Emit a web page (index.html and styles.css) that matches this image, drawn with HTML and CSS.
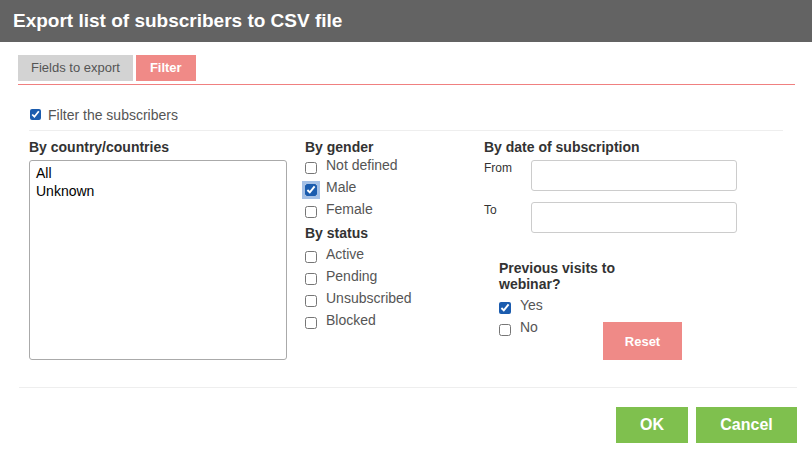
FILE: index.html
```html
<!DOCTYPE html>
<html>
<head>
<meta charset="utf-8">
<link rel="stylesheet" href="styles.css">
</head>
<body>
<div class="dialog">
  <header class="titlebar">Export list of subscribers to CSV file</header>
  <div class="body">
    <nav class="tabs">
      <span class="tab">Fields to export</span>
      <span class="tab active">Filter</span>
    </nav>
    <div class="panel">
      <label class="filter-row"><input type="checkbox" checked> Filter the subscribers</label>
      <div class="cols">
        <div class="col col-country">
          <h3>By country/countries</h3>
          <div class="listbox">
            <div>All</div>
            <div>Unknown</div>
          </div>
        </div>
        <div class="col col-gender">
          <h3>By gender</h3>
          <label class="cb"><input type="checkbox"><span>Not defined</span></label>
          <label class="cb"><input type="checkbox" class="focus" checked><span>Male</span></label>
          <label class="cb"><input type="checkbox"><span>Female</span></label>
          <h3 class="h-status">By status</h3>
          <label class="cb"><input type="checkbox"><span>Active</span></label>
          <label class="cb"><input type="checkbox"><span>Pending</span></label>
          <label class="cb"><input type="checkbox"><span>Unsubscribed</span></label>
          <label class="cb"><input type="checkbox"><span>Blocked</span></label>
        </div>
        <div class="col col-date">
          <h3>By date of subscription</h3>
          <div class="field"><span class="flabel">From</span><span class="input"></span></div>
          <div class="field"><span class="flabel">To</span><span class="input"></span></div>
          <div class="webinar">
            <h3 class="h-webinar">Previous visits to webinar?</h3>
            <div class="webinar-row">
              <div class="webinar-opts">
                <label class="cb"><input type="checkbox" checked><span>Yes</span></label>
                <label class="cb"><input type="checkbox"><span>No</span></label>
              </div>
              <button class="btn-reset">Reset</button>
            </div>
          </div>
        </div>
      </div>
    </div>
    <footer class="footer">
      <button class="btn-green btn-ok">OK</button>
      <button class="btn-green btn-cancel">Cancel</button>
    </footer>
  </div>
</div>
</body>
</html>
```
FILE: styles.css
```css
* { box-sizing: border-box; }
html, body { margin: 0; padding: 0; background: #fff; }
body { font-family: "Liberation Sans", Arial, sans-serif; color: #555; width: 812px; height: 461px; overflow: hidden; }

.titlebar {
  height: 42px;
  background: #636363;
  color: #fff;
  font-weight: bold;
  font-size: 19px;
  line-height: 42px;
  padding-left: 13px;
}

.body { padding: 13px 17px 0 18px; }

.tabs {
  display: flex;
  gap: 3px;
  height: 30px;
  border-bottom: 1px solid #f08080;
}
.tab {
  height: 26px;
  line-height: 26px;
  font-size: 13px;
  padding: 0 13px;
  background: #d3d3d3;
  color: #555;
}
.tab.active {
  background: #f08a87;
  color: #fff;
  font-weight: bold;
  padding: 0 14px;
}

.panel { padding: 0 12px 0 11px; }

.filter-row {
  display: flex;
  align-items: center;
  height: 46px;
  padding-top: 22px;
  padding-bottom: 8px;
  font-size: 14px;
  border-bottom: 1px solid #eee;
  color: #555;
}
.filter-row input { margin: 0 7px 0 1px; width: 11px; height: 11px; }

input[type=checkbox] { accent-color: #1b5cae; }

.cols {
  display: grid;
  grid-template-columns: 258px 179px 1fr;
  column-gap: 18px;
  padding-top: 7px;
  height: 256px;
}
.col-date { margin-left: -18px; }

h3 {
  margin: 0;
  font-size: 14px;
  font-weight: bold;
  color: #333;
  line-height: 18px;
}

.listbox {
  margin-top: 4px;
  height: 200px;
  border: 1px solid #aaa;
  border-radius: 3px;
  padding: 3px 6px;
  font-size: 14px;
  line-height: 18px;
  color: #000;
}

.cb {
  display: flex;
  align-items: center;
  height: 22px;
  font-size: 14px;
  color: #555;
}
.cb input { margin: 4px 9px 0 0; width: 12px; height: 12px; flex: none; }
.cb span { position: relative; top: -1px; }
.col-gender h3:first-child { margin-bottom: -1px; }
.h-status { margin-top: 3px; margin-bottom: 2px; }
.cb input.focus { outline: 3px solid rgba(90,140,210,0.55); outline-offset: 0; border-radius: 3px; }

.field { display: flex; align-items: flex-start; margin-top: 4px; }
.field + .field { margin-top: 11px; }
.flabel { width: 47px; font-size: 12px; color: #333; padding-top: 1px; }
.input {
  width: 206px;
  height: 31px;
  border: 1px solid #ccc;
  border-radius: 3px;
}

.webinar { margin: 27px 0 0 15px; }
.h-webinar { width: 150px; line-height: 16px; margin-bottom: 3px; }
.webinar-row { display: flex; }
.webinar-opts { width: 104px; }
.btn-reset {
  margin-top: 27px;
  width: 79px;
  height: 38px;
  border: 0;
  background: #ef8a87;
  color: #fff;
  font-family: inherit;
  font-weight: bold;
  font-size: 13px;
  padding: 0;
}

.footer {
  margin: 0 -2px 0 1px;
  border-top: 1px solid #eee;
  padding-top: 19px;
  display: flex;
  justify-content: flex-end;
  gap: 8px;
}
.btn-green {
  height: 36px;
  border: 0;
  background: #7fc04e;
  color: #fff;
  font-family: inherit;
  font-weight: bold;
  font-size: 16px;
  padding: 0;
}
.btn-ok { width: 72px; }
.btn-cancel { width: 101px; }
```
